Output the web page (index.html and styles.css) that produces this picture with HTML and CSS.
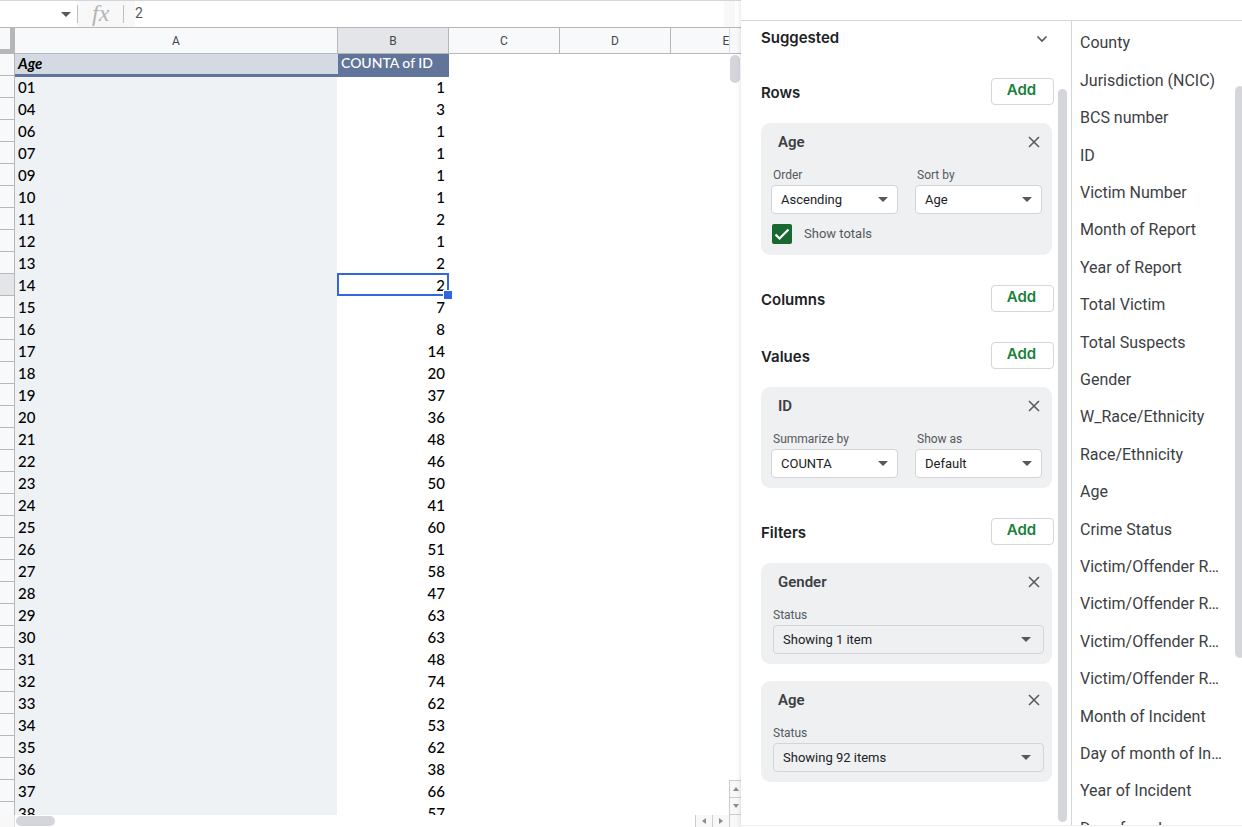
FILE: index.html
```html
<!DOCTYPE html>
<html lang="en">
<head>
<meta charset="utf-8">
<title>Pivot table editor</title>
<link rel="stylesheet" href="styles.css">
</head>
<body>
<svg class="defs" aria-hidden="true">
  <symbol id="close" viewBox="0 0 12 12"><path d="M1 1 11 11M11 1 1 11" fill="none" stroke="#55595e" stroke-width="1.5"/></symbol>
  <symbol id="caret" viewBox="0 0 10 5"><path d="M0 0h10L5 5z" fill="#55595e"/></symbol>
</svg>
<main class="workbook">
  <div class="formula-bar">
    <div class="name-box">
      <input class="name-input" aria-label="Name box">
      <svg class="caret"><use href="#caret"/></svg>
    </div>
    <label class="fx" for="formula"><span class="fx-text">fx</span></label>
    <input class="formula" id="formula" value="2">
    <div class="bar-end"></div>
  </div>
  <div class="sheet">
    <div class="viewport">
      <table class="grid">
        <colgroup><col class="col-head"><col class="col-a"><col class="col-n"><col class="col-n"><col class="col-n"><col class="col-n"></colgroup>
        <thead><tr><th class="corner"></th><th>A</th><th class="active">B</th><th>C</th><th>D</th><th>E</th></tr></thead>
        <tbody>
          <tr class="titles"><th></th><td>Age</td><td>COUNTA of ID</td></tr>
          <tr><th></th><td>01</td><td>1</td></tr>
          <tr><th></th><td>04</td><td>3</td></tr>
          <tr><th></th><td>06</td><td>1</td></tr>
          <tr><th></th><td>07</td><td>1</td></tr>
          <tr><th></th><td>09</td><td>1</td></tr>
          <tr><th></th><td>10</td><td>1</td></tr>
          <tr><th></th><td>11</td><td>2</td></tr>
          <tr><th></th><td>12</td><td>1</td></tr>
          <tr><th></th><td>13</td><td>2</td></tr>
          <tr><th class="active"></th><td>14</td><td class="selected">2</td></tr>
          <tr><th></th><td>15</td><td>7</td></tr>
          <tr><th></th><td>16</td><td>8</td></tr>
          <tr><th></th><td>17</td><td>14</td></tr>
          <tr><th></th><td>18</td><td>20</td></tr>
          <tr><th></th><td>19</td><td>37</td></tr>
          <tr><th></th><td>20</td><td>36</td></tr>
          <tr><th></th><td>21</td><td>48</td></tr>
          <tr><th></th><td>22</td><td>46</td></tr>
          <tr><th></th><td>23</td><td>50</td></tr>
          <tr><th></th><td>24</td><td>41</td></tr>
          <tr><th></th><td>25</td><td>60</td></tr>
          <tr><th></th><td>26</td><td>51</td></tr>
          <tr><th></th><td>27</td><td>58</td></tr>
          <tr><th></th><td>28</td><td>47</td></tr>
          <tr><th></th><td>29</td><td>63</td></tr>
          <tr><th></th><td>30</td><td>63</td></tr>
          <tr><th></th><td>31</td><td>48</td></tr>
          <tr><th></th><td>32</td><td>74</td></tr>
          <tr><th></th><td>33</td><td>62</td></tr>
          <tr><th></th><td>34</td><td>53</td></tr>
          <tr><th></th><td>35</td><td>62</td></tr>
          <tr><th></th><td>36</td><td>38</td></tr>
          <tr><th></th><td>37</td><td>66</td></tr>
          <tr><th></th><td>38</td><td>57</td></tr>
        </tbody>
      </table>
    </div>
    <div class="vscroll">
      <div class="vscroll-head"></div>
      <div class="vscroll-track"><div class="vthumb"></div></div>
      <button class="step" aria-label="Scroll up"><svg width="6" height="4" viewBox="0 0 6 4"><path d="M0 4h6L3 0z" fill="#8c8c8c"/></svg></button>
      <button class="step last" aria-label="Scroll down"><svg width="6" height="4" viewBox="0 0 6 4"><path d="M0 0h6L3 4z" fill="#8c8c8c"/></svg></button>
    </div>
  </div>
  <div class="hscroll">
    <div class="hscroll-head"></div>
    <div class="hscroll-track"><div class="hthumb"></div></div>
    <button class="hstep" aria-label="Scroll left"><svg width="4" height="6" viewBox="0 0 4 6"><path d="M4 0v6L0 3z" fill="#8c8c8c"/></svg></button>
    <button class="hstep" aria-label="Scroll right"><svg width="4" height="6" viewBox="0 0 4 6"><path d="M0 0v6l4-3z" fill="#8c8c8c"/></svg></button>
    <div class="scroll-corner"></div>
  </div>
</main>

<aside class="panel">
  <div class="panel-body">
    <div class="editor">
      <div class="editor-content">
        <section class="section suggested">
          <h2 class="heading">Suggested</h2>
          <button class="expand" aria-label="Expand suggestions"><svg width="12" height="8" viewBox="0 0 12 8"><path d="M1.5 1.5 6 6l4.500-4.500" fill="none" stroke="#55595e" stroke-width="1.700"/></svg></button>
        </section>
        <section class="section">
          <h2 class="heading">Rows</h2><button class="add">Add</button>
        </section>
        <div class="card">
          <div class="card-head"><h3 class="card-title">Age</h3><button class="close" aria-label="Remove Age"><svg class="x"><use href="#close"/></svg></button></div>
          <div class="fields">
            <div class="field"><label for="order">Order</label><div class="drop"><select id="order"><option>Ascending</option></select><svg class="caret"><use href="#caret"/></svg></div></div>
            <div class="field"><label for="sort">Sort by</label><div class="drop"><select id="sort"><option>Age</option></select><svg class="caret"><use href="#caret"/></svg></div></div>
          </div>
          <label class="check"><input type="checkbox" checked><svg class="tick" viewBox="0 0 20 20"><path d="m3.500 10.500 4 4 9-9" fill="none" stroke="#fff" stroke-width="2.200"/></svg><span>Show totals</span></label>
        </div>
        <section class="section after-card">
          <h2 class="heading">Columns</h2><button class="add">Add</button>
        </section>
        <section class="section after-card">
          <h2 class="heading">Values</h2><button class="add">Add</button>
        </section>
        <div class="card">
          <div class="card-head"><h3 class="card-title">ID</h3><button class="close" aria-label="Remove ID"><svg class="x"><use href="#close"/></svg></button></div>
          <div class="fields">
            <div class="field"><label for="summarize">Summarize by</label><div class="drop"><select id="summarize"><option>COUNTA</option></select><svg class="caret"><use href="#caret"/></svg></div></div>
            <div class="field"><label for="show">Show as</label><div class="drop"><select id="show"><option>Default</option></select><svg class="caret"><use href="#caret"/></svg></div></div>
          </div>
        </div>
        <section class="section after-card">
          <h2 class="heading">Filters</h2><button class="add">Add</button>
        </section>
        <div class="card">
          <div class="card-head"><h3 class="card-title">Gender</h3><button class="close" aria-label="Remove Gender"><svg class="x"><use href="#close"/></svg></button></div>
          <div class="fields status">
            <div class="field"><label for="gender">Status</label><div class="drop"><select id="gender"><option>Showing 1 item</option></select><svg class="caret"><use href="#caret"/></svg></div></div>
          </div>
        </div>
        <div class="card next">
          <div class="card-head"><h3 class="card-title">Age</h3><button class="close" aria-label="Remove Age filter"><svg class="x"><use href="#close"/></svg></button></div>
          <div class="fields status">
            <div class="field"><label for="age">Status</label><div class="drop"><select id="age"><option>Showing 92 items</option></select><svg class="caret"><use href="#caret"/></svg></div></div>
          </div>
        </div>
      </div>
      <div class="editor-scroll"></div>
    </div>
    <div class="field-pane">
      <ul class="field-list">
        <li>County</li>
        <li>Jurisdiction (NCIC)</li>
        <li>BCS number</li>
        <li>ID</li>
        <li>Victim Number</li>
        <li>Month of Report</li>
        <li>Year of Report</li>
        <li>Total Victim</li>
        <li>Total Suspects</li>
        <li>Gender</li>
        <li>W_Race/Ethnicity</li>
        <li>Race/Ethnicity</li>
        <li>Age</li>
        <li>Crime Status</li>
        <li>Victim/Offender R…</li>
        <li>Victim/Offender R…</li>
        <li>Victim/Offender R…</li>
        <li>Victim/Offender R…</li>
        <li>Month of Incident</li>
        <li>Day of month of In…</li>
        <li>Year of Incident</li>
        <li>Day of week</li>
      </ul>
      <div class="list-scroll"><div class="list-thumb"></div></div>
    </div>
  </div>
</aside>
</body>
</html>
```
FILE: styles.css
```css
* { box-sizing: border-box; }
body {
  margin: 0;
  height: 100vh;
  display: flex;
  overflow: hidden;
  background: #fff;
  font-family: Roboto, "Liberation Sans", sans-serif;
  color: #202124;
}
button, input, select { font: inherit; color: inherit; }
button { padding: 0; border: 0; background: none; }
h2, h3, ul { margin: 0; padding: 0; }
.defs { position: absolute; width: 0; height: 0; }
.caret { width: 10px; height: 5px; }

/* Workbook */
.workbook { flex: 1; min-width: 0; display: flex; flex-direction: column; }
.formula-bar {
  flex: none;
  height: 28px;
  display: flex;
  border-top: 1px solid #d5d6dc;
  border-bottom: 1px solid #b7b7b7;
}
.name-box { width: 77px; display: flex; align-items: center; padding-right: 6px; }
.name-input { flex: 1; min-width: 0; border: 0; padding: 0; }
.fx {
  width: 58px;
  display: flex;
  align-items: center;
  background: #f8f8f8;
}
.fx-text {
  width: 47px;
  height: 18px;
  padding-left: 14px;
  border: solid #c0c0c0;
  border-width: 0 1px;
  font: italic 24px/16px "Liberation Serif", serif;
  color: #b4b4b4;
}
.formula { flex: 1; min-width: 0; border: 0; padding: 0 0 2px; font-size: 14px; color: #55595e; background: #fff; }
.bar-end { width: 11px; margin-right: 6px; background: #f8f8f8; }

.sheet { flex: 1; min-height: 0; display: flex; }
.viewport { flex: 1; min-width: 0; overflow: hidden; }
.grid {
  width: 782px;
  table-layout: fixed;
  border-collapse: separate;
  border-spacing: 0;
  font: 500 15px/20px Lato, Carlito, sans-serif;
  color: #000;
}
.col-head { width: 15px; }
.col-a { width: 323px; }
.col-n { width: 111px; }
.grid th, .grid td { padding: 0; }
.grid th { background: #f8f9fb; border-right: 1px solid #b7b7b7; border-bottom: 1px solid #b7b7b7; }
.grid th.active { background: #e4e5e9; }
.grid thead th { height: 26px; font: 400 12px/24px Roboto, sans-serif; color: #44474a; }
.grid thead .corner { border-right: 5px solid #b7b7b7; border-bottom: 5px solid #b7b7b7; }
.grid tbody tr { height: 22px; }
.grid tbody td { height: 22px; padding: 1px 4px 1px 3px; }
.grid tbody td:nth-child(2) { background: #eef2f5; border-right: 1px solid #fff; }
.grid tbody td:nth-child(3) { text-align: right; }
.grid .titles td { position: relative; z-index: 1; padding-top: 0; padding-bottom: 4px; line-height: 16px; }
.grid .titles td:nth-child(2) {
  background: #d4dae3;
  border: 0;
  border-bottom: 2px solid #607599;
  box-shadow: 0 1px #607599;
  padding-bottom: 2px;
  font-style: italic;
  font-weight: 700;
}
.grid .titles td:nth-child(3) {
  background: #607599;
  box-shadow: 0 1px #607599;
  font-size: 14px;
  color: #fff;
  text-align: left;
}
.selected { position: relative; }
.selected::before { content: ""; position: absolute; inset: -1px 0 0 -1px; border: 2px solid #3367df; }
.selected::after {
  content: "";
  position: absolute;
  right: -3px;
  bottom: -3px;
  width: 8px;
  height: 8px;
  background: #3367df;
  border: solid #fff;
  border-width: 1px 0 0 1px;
}

.vscroll { width: 12px; display: flex; flex-direction: column; }
.vscroll-head { height: 26px; background: #f8f9fb; border-left: 1px solid #ddd; border-bottom: 1px solid #b7b7b7; }
.vscroll-track { flex: 1; padding: 1px; }
.vthumb { width: 10px; height: 28px; border-radius: 5px; background: #d5d6dc; }
.step {
  height: 17px;
  display: flex;
  align-items: center;
  justify-content: center;
  border: solid #ccc;
  border-width: 1px 0 0 1px;
  background: #f8f8f8;
}
.step.last { height: 18px; border-bottom-width: 1px; }
.hscroll { flex: none; height: 12px; display: flex; }
.hscroll-head { width: 15px; background: #f8f8f8; border-right: 1px solid #ddd; }
.hscroll-track { flex: 1; padding: 1px; }
.hthumb { width: 39px; height: 10px; border-radius: 5px; background: #d5d6dc; }
.hstep {
  width: 17px;
  display: flex;
  align-items: center;
  justify-content: center;
  border-left: 1px solid #ccc;
  background: #f8f8f8;
}
.scroll-corner { width: 12px; background: #f8f8f8; border-left: 1px solid #ccc; }

/* Pivot editor */
.panel {
  flex: none;
  width: 501px;
  display: flex;
  padding: 20px 0 1px;
  background: #fff;
  box-shadow: 0 0 5px rgba(60, 64, 67, .2);
}
.panel-body { flex: 1; min-width: 0; display: flex; border-top: 1px solid #d5d6dc; border-bottom: 1px solid #eee; }
.editor { width: 331px; display: flex; border-right: 1px solid #d5d6dc; }
.editor-content { flex: 1; min-width: 0; padding: 3px 4px 0 20px; }
.editor-scroll { width: 9px; margin: 68px 4px 3px 0; border-radius: 5px; background: #d5d6dc; }
.section { height: 27px; display: flex; align-items: center; justify-content: space-between; }
.suggested { margin-bottom: 27px; }
.after-card { margin-top: 30px; }
.heading { padding-top: 3px; font: 600 15px/20px Inter, sans-serif; }
.suggested .heading { padding-top: 0; }
.expand { width: 24px; height: 24px; }
.add {
  width: 63px;
  height: 27px;
  padding: 0 2px 3px 0;
  border: 1px solid #d5d6dc;
  border-radius: 4px;
  background: #fff;
  font: 600 15px/20px Inter, sans-serif;
  color: #188038;
}
.card { margin: 18px 2px 0 0; padding: 0 10px 10px; border-radius: 9px; background: #eff0f2; }
.card.next { margin-top: 17px; }
.card-head { height: 38px; display: flex; align-items: center; justify-content: space-between; padding-left: 7px; }
.card-title { font-size: 15px; line-height: 20px; font-weight: 600; color: #3c4043; }
.close { width: 16px; height: 16px; display: flex; align-items: center; justify-content: center; }
.x { width: 12px; height: 12px; }
.fields { display: flex; gap: 17px; padding-top: 6px; }
.field { flex: 1; min-width: 0; }
.field label { display: block; height: 18px; padding-left: 2px; font-size: 12px; line-height: 16px; color: #55595e; }
.drop { display: grid; align-items: center; }
.drop select {
  grid-area: 1 / 1;
  width: 100%;
  height: 29px;
  padding: 0 9px;
  appearance: none;
  border: 1px solid #d2d4d8;
  border-radius: 4px;
  background: #fff;
  font-size: 13px;
}
.drop .caret { grid-area: 1 / 1; justify-self: end; margin-right: 10px; pointer-events: none; }
.status { padding-left: 2px; margin-right: -2px; }
.status label { padding-left: 0; }
.status select { background: transparent; }
.status .caret { margin-right: 13px; }
.check { display: grid; grid-template-columns: 20px 1fr; align-items: center; column-gap: 12px; padding: 10px 0 1px 1px; font-size: 13px; line-height: 20px; color: #55595e; }
.check input { grid-area: 1 / 1; appearance: none; width: 20px; height: 20px; margin: 0; border-radius: 2px; background: #18682f; }
.tick { grid-area: 1 / 1; width: 20px; height: 20px; }

.field-pane { flex: 1; min-width: 0; display: flex; overflow: hidden; }
.field-list {
  flex: 1;
  min-width: 0;
  min-height: 0;
  display: grid;
  grid-auto-rows: 37px 38px 37px 38px 37px;
  align-items: center;
  padding: 3px 0 0 8px;
  overflow: hidden;
  list-style: none;
  font-size: 16px;
  color: #3c4043;
  white-space: nowrap;
}
.list-scroll { width: 7px; padding-top: 65px; }
.list-thumb { width: 10px; height: 572px; border-radius: 5px; background: #d5d6dc; }
```
